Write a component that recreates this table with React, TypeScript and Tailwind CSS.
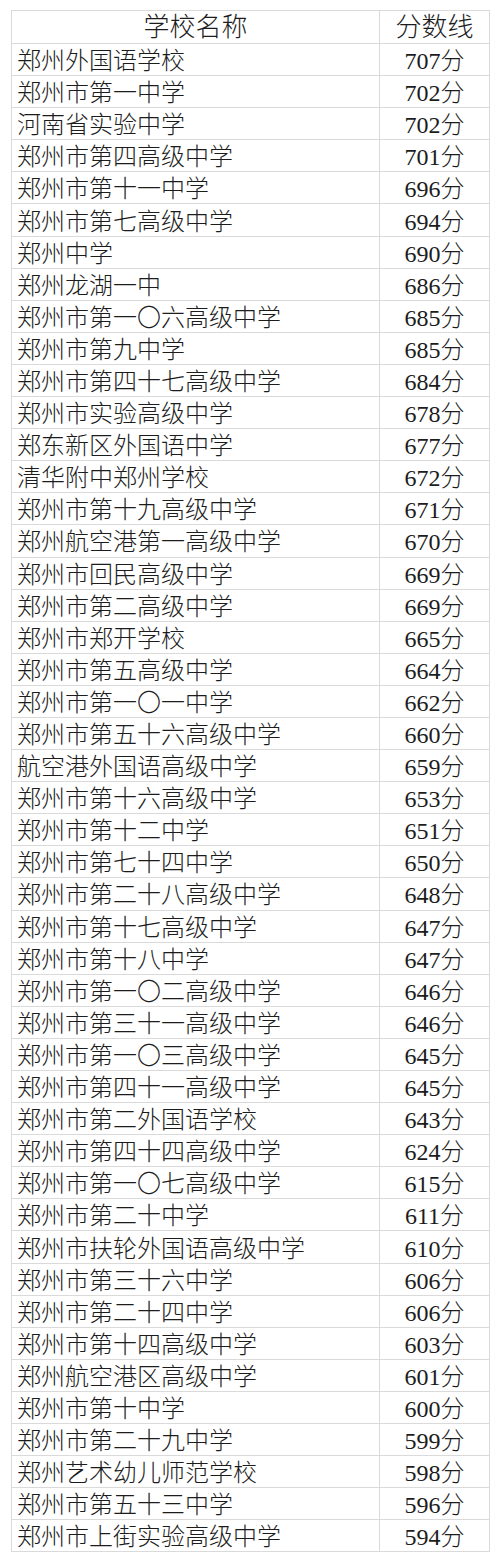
const rows: [string, number][] = [
  ['郑州外国语学校', 707],
  ['郑州市第一中学', 702],
  ['河南省实验中学', 702],
  ['郑州市第四高级中学', 701],
  ['郑州市第十一中学', 696],
  ['郑州市第七高级中学', 694],
  ['郑州中学', 690],
  ['郑州龙湖一中', 686],
  ['郑州市第一〇六高级中学', 685],
  ['郑州市第九中学', 685],
  ['郑州市第四十七高级中学', 684],
  ['郑州市实验高级中学', 678],
  ['郑东新区外国语中学', 677],
  ['清华附中郑州学校', 672],
  ['郑州市第十九高级中学', 671],
  ['郑州航空港第一高级中学', 670],
  ['郑州市回民高级中学', 669],
  ['郑州市第二高级中学', 669],
  ['郑州市郑开学校', 665],
  ['郑州市第五高级中学', 664],
  ['郑州市第一〇一中学', 662],
  ['郑州市第五十六高级中学', 660],
  ['航空港外国语高级中学', 659],
  ['郑州市第十六高级中学', 653],
  ['郑州市第十二中学', 651],
  ['郑州市第七十四中学', 650],
  ['郑州市第二十八高级中学', 648],
  ['郑州市第十七高级中学', 647],
  ['郑州市第十八中学', 647],
  ['郑州市第一〇二高级中学', 646],
  ['郑州市第三十一高级中学', 646],
  ['郑州市第一〇三高级中学', 645],
  ['郑州市第四十一高级中学', 645],
  ['郑州市第二外国语学校', 643],
  ['郑州市第四十四高级中学', 624],
  ['郑州市第一〇七高级中学', 615],
  ['郑州市第二十中学', 611],
  ['郑州市扶轮外国语高级中学', 610],
  ['郑州市第三十六中学', 606],
  ['郑州市第二十四中学', 606],
  ['郑州市第十四高级中学', 603],
  ['郑州航空港区高级中学', 601],
  ['郑州市第十中学', 600],
  ['郑州市第二十九中学', 599],
  ['郑州艺术幼儿师范学校', 598],
  ['郑州市第五十三中学', 596],
  ['郑州市上街实验高级中学', 594],
]

export default function App() {
  return (
    <div className="min-h-screen bg-white pt-[10px] pl-[11px] text-[#1c1c1c] font-['Liberation_Serif','Noto_Sans_CJK_SC',serif] font-light">
      <div className="w-[479px] border-l border-t border-[#dadada]">
        <div className="grid grid-cols-[368px_110px] h-[33px] text-[26px] leading-none">
          <div className="flex items-center justify-center border-r border-b border-[#dadada] pt-[2px]">学校名称</div>
          <div className="flex items-center justify-center border-r border-b border-[#dadada] pt-[2px]">分数线</div>
        </div>
        {rows.map(([name, score]) => (
          <div key={name} className="grid grid-cols-[368px_110px] h-[32.1px] text-[24px] leading-none">
            <div className="flex items-center pl-[5px] pt-[3px] border-r border-b border-[#dadada] whitespace-nowrap">{name}</div>
            <div className="flex items-center justify-center pt-[3px] border-r border-b border-[#dadada]">{score}分</div>
          </div>
        ))}
      </div>
    </div>
  )
}
